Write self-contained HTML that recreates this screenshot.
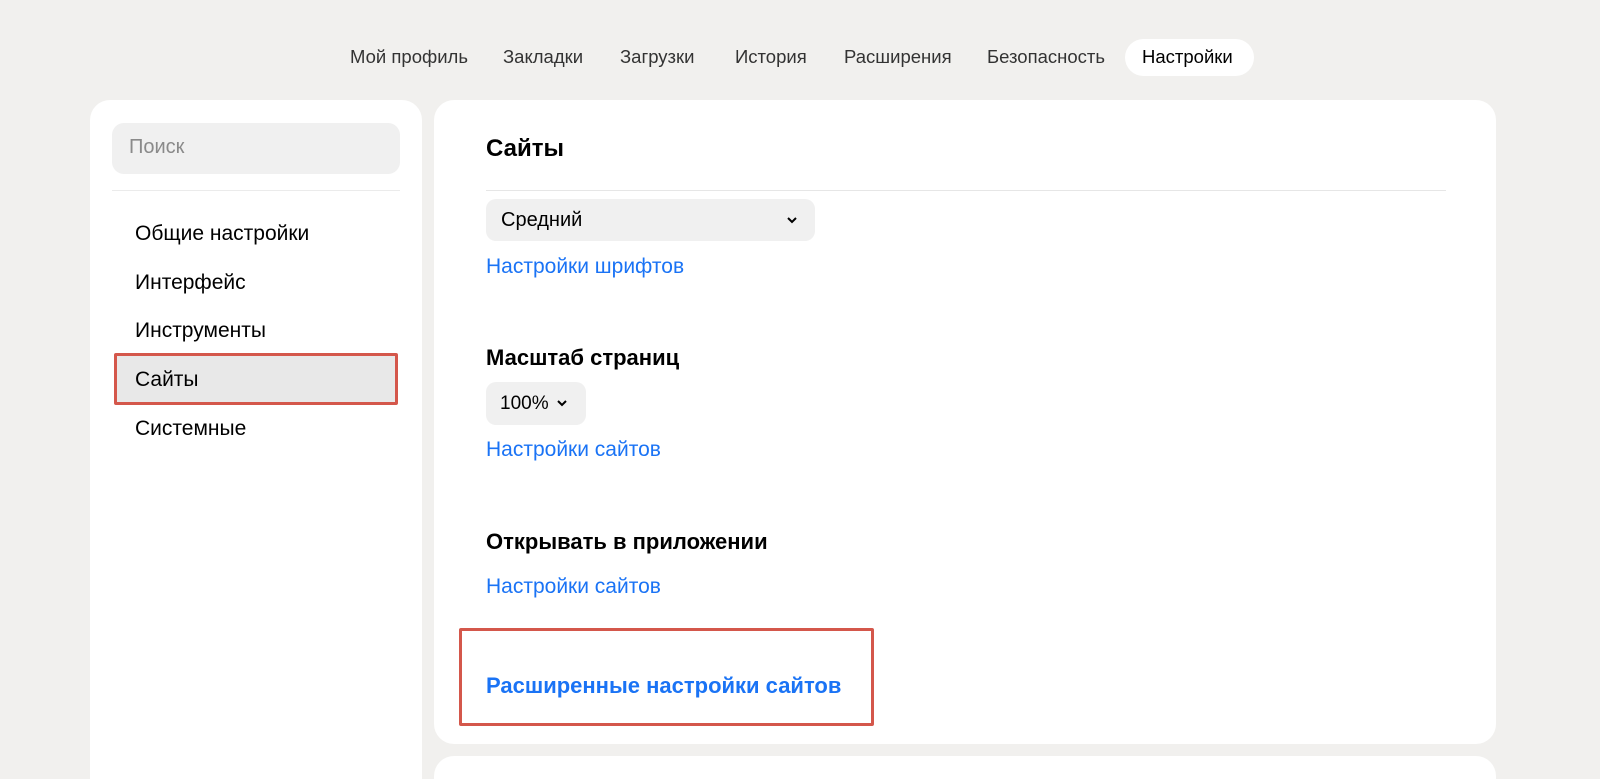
<!DOCTYPE html>
<html><head><meta charset="utf-8"><style>
*{box-sizing:border-box;margin:0;padding:0}
html,body{width:1600px;height:779px;overflow:hidden}
body{background:#f1f0ee;font-family:"Liberation Sans",sans-serif;color:#000;position:relative}
.a{position:absolute}
.nav{font-size:18.5px;color:#333;top:46px}
.pill{left:1125px;top:39px;width:129px;height:37px;background:#fff;border-radius:19px}
.left{left:90px;top:100px;width:332px;height:679px;background:#fff;border-radius:20px 20px 0 0}
.main{left:434px;top:100px;width:1062px;height:644px;background:#fff;border-radius:20px}
.main2{left:434px;top:756px;width:1062px;height:23px;background:#fff;border-radius:20px 20px 0 0}
.item{font-size:21px;left:135px}
.link{color:#1a73f5;font-size:21px;left:486px}
.h{font-weight:bold;font-size:22px;left:486px}
.red{border:3px solid #d4574b;border-radius:2px}
</style></head><body>
<div class="a pill"></div>
<div class="a nav" style="left:350px">Мой профиль</div>
<div class="a nav" style="left:503px">Закладки</div>
<div class="a nav" style="left:620px">Загрузки</div>
<div class="a nav" style="left:735px">История</div>
<div class="a nav" style="left:844px">Расширения</div>
<div class="a nav" style="left:987px">Безопасность</div>
<div class="a nav" style="left:1142px;color:#000">Настройки</div>

<div class="a left"></div>
<div class="a" style="left:112px;top:123px;width:288px;height:51px;background:#f0f0f0;border-radius:12px"></div>
<div class="a" style="left:129px;top:136px;font-size:20px;color:#8a8a8a">Поиск</div>
<div class="a" style="left:112px;top:190px;width:288px;height:1px;background:#ebebeb"></div>
<div class="a item" style="top:222px">Общие настройки</div>
<div class="a item" style="top:271px">Интерфейс</div>
<div class="a item" style="top:319px">Инструменты</div>
<div class="a red" style="left:114px;top:353px;width:284px;height:52px;background:#e8e8e8"></div>
<div class="a item" style="top:368px">Сайты</div>
<div class="a item" style="top:417px">Системные</div>

<div class="a main"></div>
<div class="main2 a"></div>
<div class="a h" style="top:135px;font-size:24px">Сайты</div>
<div class="a" style="left:486px;top:190px;width:960px;height:1px;background:#e6e6e6"></div>
<div class="a" style="left:486px;top:199px;width:329px;height:42px;background:#f0f0f0;border-radius:10px"></div>
<div class="a" style="left:501px;top:209px;font-size:20px">Средний</div>
<svg class="a" style="left:786px;top:215px" width="12" height="10"><path d="M2 3l4 4 4-4" fill="none" stroke="#000" stroke-width="2"/></svg>
<div class="a link" style="top:255px">Настройки шрифтов</div>
<div class="a h" style="top:345px">Масштаб страниц</div>
<div class="a" style="left:486px;top:382px;width:100px;height:43px;background:#f0f0f0;border-radius:10px"></div>
<div class="a" style="left:500px;top:393px;font-size:19px">100%</div>
<svg class="a" style="left:556px;top:398px" width="12" height="10"><path d="M2 3l4 4 4-4" fill="none" stroke="#000" stroke-width="2"/></svg>
<div class="a link" style="top:438px">Настройки сайтов</div>
<div class="a h" style="top:529px">Открывать в приложении</div>
<div class="a link" style="top:575px">Настройки сайтов</div>
<div class="a red" style="left:459px;top:628px;width:415px;height:98px"></div>
<div class="a link" style="top:673px;font-weight:bold;font-size:22px">Расширенные настройки сайтов</div>
</body></html>
